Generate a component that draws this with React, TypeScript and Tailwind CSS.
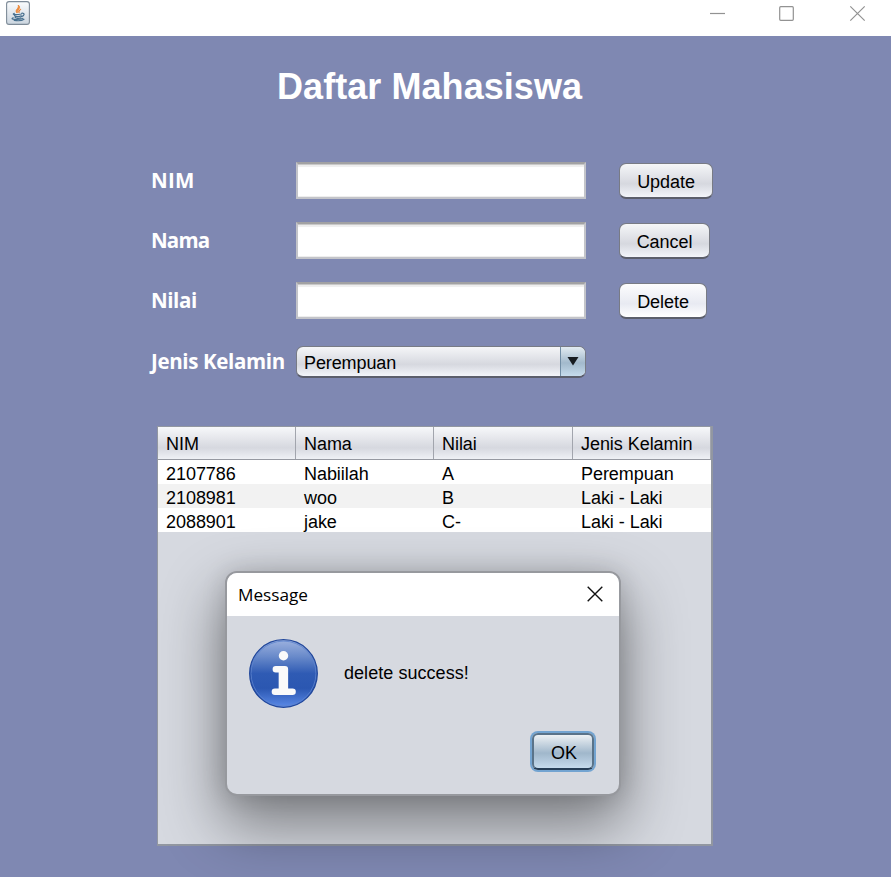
import React from "react";

const sans = "font-['Liberation_Sans',Arial,sans-serif]";

const fields = [
  { label: "NIM", action: "Update", width: "w-[94px]", tone: "from-[#f5f6f8] via-[#d6d8df] to-[#f3f5fa]", spacing: "tracking-[0.3px]" },
  { label: "Nama", action: "Cancel", width: "w-[91px]", tone: "from-[#f5f6f8] via-[#d6d8df] to-[#f3f5fa]", spacing: "tracking-[-0.8px]" },
  { label: "Nilai", action: "Delete", width: "w-[88px]", tone: "from-[#fcfcfd] via-[#e8eaf2] to-[#ffffff]", spacing: "tracking-[-0.4px]" },
];

const columns = ["NIM", "Nama", "Nilai", "Jenis Kelamin"];
const rows = [
  ["2107786", "Nabiilah", "A", "Perempuan"],
  ["2108981", "woo", "B", "Laki - Laki"],
  ["2088901", "jake", "C-", "Laki - Laki"],
];

function JavaIcon() {
  return (
    <svg width="24" height="24" viewBox="0 0 24 24" fill="none">
      <defs>
        <linearGradient id="tile" x1="0" y1="0" x2="0" y2="1">
          <stop offset="0" stopColor="#fbfcfd" />
          <stop offset="1" stopColor="#cbd5df" />
        </linearGradient>
      </defs>
      <rect x="0.6" y="0.6" width="22.8" height="22.8" rx="2.5" fill="url(#tile)" stroke="#7e8b98" strokeWidth="1.1" />
      <path d="M11.2 12C7.8 9 13.6 7.6 12.2 4C16 7.2 10.5 8.8 11.2 12Z" fill="#ed8b3c" stroke="#ed8b3c" strokeWidth="1" />
      <path d="M13.2 12c-1.7-1.7-.2-3.2 1.8-4-.8 1.4-2 1.7-1.8 4Z" fill="#e87725" stroke="#e87725" strokeWidth="0.5" />
      <path d="M8.3 12.4c-3.4 1.2 1.4 1.7 7 .6M8.3 14.2c.7 1.8 5 1.6 7.1.7M9 16.2c1 1.4 3.9 1.2 5.7.6M15.6 12.2c3.9-.5 2.8 2.7-.1 3.4M7.3 16.8c-4.7 1.5 4.7 2.7 9.6.5M8.2 19.4c4 .6 8.1.2 9.8-1.1" stroke="#476f8e" strokeWidth="1.15" strokeLinecap="round" />
    </svg>
  );
}

function InfoIcon() {
  return (
    <svg width="69" height="69" viewBox="0 0 70 70" className="shrink-0">
      <defs>
        <linearGradient id="info" x1="0" y1="0" x2="0" y2="1">
          <stop offset="0" stopColor="#9db2df" />
          <stop offset="0.25" stopColor="#698aca" />
          <stop offset="0.5" stopColor="#2f5bb4" />
          <stop offset="0.72" stopColor="#2b57b1" />
          <stop offset="1" stopColor="#5b8ae8" />
        </linearGradient>
      </defs>
      <circle cx="35" cy="35" r="34.3" fill="url(#info)" stroke="#21479b" strokeWidth="1.3" />
      <circle cx="35" cy="35" r="32.9" fill="none" stroke="#5d83cd" strokeWidth="0.8" />
      <circle cx="35" cy="17" r="4.8" fill="#fafafa" />
      <path d="M27.2 27.5h9.3a3.2 3.2 0 0 1 3.2 3.2v19.6h4.5a3.3 3.3 0 0 1 0 6.6H26.3a3.3 3.3 0 0 1 0-6.6h3.8V34h-2.9a3.25 3.25 0 0 1 0-6.5Z" fill="#fafafa" />
    </svg>
  );
}

function Field({ label, action, width, tone, spacing }: (typeof fields)[number]) {
  return (
    <div className="flex h-9 items-start">
      <label className={`w-[145px] font-['Open_Sans','Noto_Sans',sans-serif] text-[20.5px] font-bold leading-9 text-white ${spacing}`}>{label}</label>
      <div className="h-[37px] w-[290px] border-2 border-t-[#a1a1a3] border-r-[#c3c4c9] border-b-[#c3c4c9] border-l-[#c3c4c9] bg-white shadow-[inset_0_1px_0_#c8c8c8,inset_0_3px_1px_#eeeeee,inset_0_-1px_0_#eeeeee]" />
      <button className={`ml-[33px] mt-px h-9 rounded-[7px] border border-[#787b85] border-b-2 border-b-[#5b5e6b] bg-linear-to-b ${tone} via-60% pt-[3px] text-[18px] leading-[28px] tracking-[-0.05px] text-black ${width}`}>{action}</button>
    </div>
  );
}

function MessageDialog() {
  return (
    <section className="absolute left-[225px] top-[571px] flex h-[225px] w-[396px] flex-col overflow-hidden rounded-[12px] border-2 border-[#97999e] bg-[#d6d9e0] shadow-[0_26px_60px_4px_rgba(0,0,0,0.42),0_0_24px_rgba(0,0,0,0.14)]">
      <header className="flex h-[43px] shrink-0 items-center justify-between bg-white pb-0.5 pl-[11px] pr-4">
        <h2 className="pt-0.5 font-['Open_Sans','Noto_Sans',sans-serif] text-[17.2px] font-normal text-black">Message</h2>
        <svg width="16" height="16" viewBox="0 0 16 16" fill="none" stroke="#111" strokeWidth="1.4"><path d="M.7.7l14.6 14.6M15.3.7.7 15.3" /></svg>
      </header>
      <div className="flex items-center gap-[26px] pl-[22px] pt-[23px]">
        <InfoIcon />
        <p className="pb-px text-[18px] leading-6 tracking-[0.05px] text-black">delete success!</p>
      </div>
      <div className="mt-[25px] flex justify-end pr-[25px]">
        <button className="h-[37px] w-[62px] rounded-[6px] border-2 border-[#5a7389] border-b-[#263e57] bg-linear-to-b from-[#edf1f4] via-[#a0b7cb] via-55% to-[#c5dbed] pl-0.5 pt-[3px] text-[18px] leading-[28px] text-black shadow-[0_0_0_2px_#73a4d1]">OK</button>
      </div>
    </section>
  );
}

export default function App() {
  return (
    <div className={`relative flex h-[877px] w-[891px] flex-col overflow-hidden bg-[#7f88b2] ${sans}`}>
      <header className="flex h-9 shrink-0 items-start justify-between bg-white pl-1.5 pt-px">
        <JavaIcon />
        <svg width="181" height="35" viewBox="710 1 181 35" fill="none" stroke="#929292" strokeWidth="1.2">
          <path d="M710 13.5h15" />
          <rect x="779.7" y="6.7" width="13.6" height="13.6" rx="1" />
          <path d="m850.3 6.3 14.4 14.4m0-14.4-14.4 14.4" />
        </svg>
      </header>
      <h1 className="mt-[27px] pl-[277px] text-[36px] font-bold leading-[48px] tracking-[0.06px] text-white">Daftar Mahasiswa</h1>
      <form className="mt-[51px] flex flex-col gap-6 pl-[151px]">
        {fields.map((field) => <Field key={field.label} {...field} />)}
        <div className="mt-1 flex h-8 items-center">
          <label className="w-[145px] whitespace-nowrap pb-px font-['Open_Sans','Noto_Sans',sans-serif] text-[20.5px] font-bold tracking-[-0.35px] text-white">Jenis Kelamin</label>
          <div className="flex h-8 w-[290px] overflow-hidden rounded-[7px] border border-[#787b85] border-b-2 border-b-[#5b5e6b] bg-linear-to-b from-[#f5f6f8] via-[#d6d8df] via-60% to-[#f3f5fa]">
            <span className="flex-1 pl-[7px] pt-[3px] text-[18px] leading-[26px] tracking-[-0.1px] text-black">Perempuan</span>
            <span className="flex w-[25px] justify-center border-l border-[#718da5] bg-linear-to-b from-[#e2ebf1] via-[#a2b9cc] via-55% to-[#c6dcec] pt-[10px]">
              <svg width="12" height="9" viewBox="0 0 12 9"><path d="M.5 0h11L6 8.5Z" fill="#161b20" /></svg>
            </span>
          </div>
        </div>
      </form>
      <table className="ml-[157px] mt-12 block h-[420px] w-[556px] border border-r-2 border-b-2 border-[#9297a1] bg-[#d6d9e0] text-left text-[18px] text-black">
        <thead className="block">
          <tr className="grid h-[33px] grid-cols-[138px_138px_139px_138px] border-b border-[#9699a1] bg-linear-to-b from-[#f7f8fa] via-[#d6d8df] via-65% to-[#eff1f5]">
            {columns.map((name) => <th key={name} className="border-r border-[#a2a5ad] pl-2 pt-0.5 font-normal leading-[30px] tracking-[-0.05px]">{name}</th>)}
          </tr>
        </thead>
        <tbody className="block">
          {rows.map((row) => (
            <tr key={row[0]} className="grid h-6 grid-cols-[138px_138px_139px_138px] bg-white even:bg-[#f2f2f2]">
              {row.map((value, index) => <td key={index} className="pl-2 pt-0.5 leading-6 tracking-[-0.05px]">{value}</td>)}
            </tr>
          ))}
        </tbody>
      </table>
      <MessageDialog />
    </div>
  );
}
